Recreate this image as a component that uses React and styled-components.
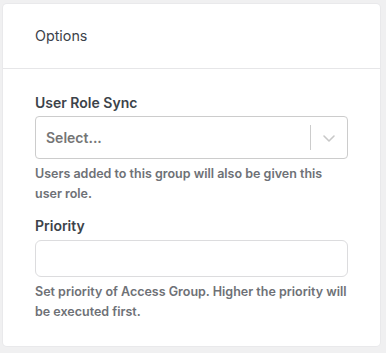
import React from "react";
import styled, { createGlobalStyle } from "styled-components";

const Global = createGlobalStyle`
  html, body { margin: 0; padding: 0; background: #f0f0f1; }
  body { font-family: Inter, "Noto Sans", sans-serif; }
  * { box-sizing: border-box; }
`;

const Page = styled.div`
  width: 386px;
  height: 353px;
  padding: 4px 6px 7px 3px;
  background: #f0f0f1;
`;

const Card = styled.section`
  background: #fff;
  border-radius: 4px;
  box-shadow: 0 0 0 1px #e9e9eb;
  height: 100%;
  display: flex;
  flex-direction: column;
`;

const Header = styled.header`
  flex-shrink: 0;
  height: 65px;
  display: flex;
  align-items: center;
  padding: 0 32px 1px;
  border-bottom: 1px solid #e6e6e8;
  font-size: 14.3px;
  color: #3c434a;
`;

const Body = styled.div`
  padding: 24px 32px;
  display: flex;
  flex-direction: column;
  gap: 13px;
`;

const Field = styled.div`
  display: flex;
  flex-direction: column;
`;

const Label = styled.label`
  font-size: 14px;
  font-weight: 600;
  color: #3c434a;
  line-height: 20px;
  margin-bottom: 3px;
`;

const SelectBox = styled.div`
  height: 43px;
  border: 1px solid #cccccc;
  border-radius: 4px;
  display: flex;
  align-items: center;
`;

const Placeholder = styled.span`
  flex: 1;
  padding-left: 10px;
  font-size: 14px;
  font-weight: 600;
  color: #757575;
`;

const Separator = styled.span`
  width: 1px;
  align-self: stretch;
  margin: 8px 0;
  background: #cccccc;
`;

const Indicator = styled.span`
  width: 36px;
  display: flex;
  justify-content: center;
  align-items: center;
  color: #c8c8c8;
`;

const Input = styled.input`
  height: 37px;
  margin-top: 1px;
  border: 1px solid #dcdcde;
  border-radius: 6px;
  font-family: inherit;
  font-size: 14px;
  padding: 0 10px;
  outline: none;
`;

const Help = styled.p`
  margin: 4px 0 0 0;
  padding-top: 1px;
  font-size: 12.5px;
  font-weight: 600;
  line-height: 19.5px;
  color: #6e7176;
`;

export default function App() {
  return (
    <>
      <Global />
      <Page>
        <Card>
          <Header>Options</Header>
          <Body>
            <Field>
              <Label>User Role Sync</Label>
              <SelectBox>
                <Placeholder>Select...</Placeholder>
                <Separator />
                <Indicator>
                  <svg width="14" height="10" viewBox="0 0 14 10" fill="none">
                    <polyline
                      points="2,3 7,8 12,3"
                      stroke="currentColor"
                      strokeWidth="1.6"
                      strokeLinecap="round"
                      strokeLinejoin="round"
                    />
                  </svg>
                </Indicator>
              </SelectBox>
              <Help>Users added to this group will also be given this user role.</Help>
            </Field>
            <Field>
              <Label>Priority</Label>
              <Input type="text" />
              <Help>Set priority of Access Group. Higher the priority will be executed first.</Help>
            </Field>
          </Body>
        </Card>
      </Page>
    </>
  );
}
